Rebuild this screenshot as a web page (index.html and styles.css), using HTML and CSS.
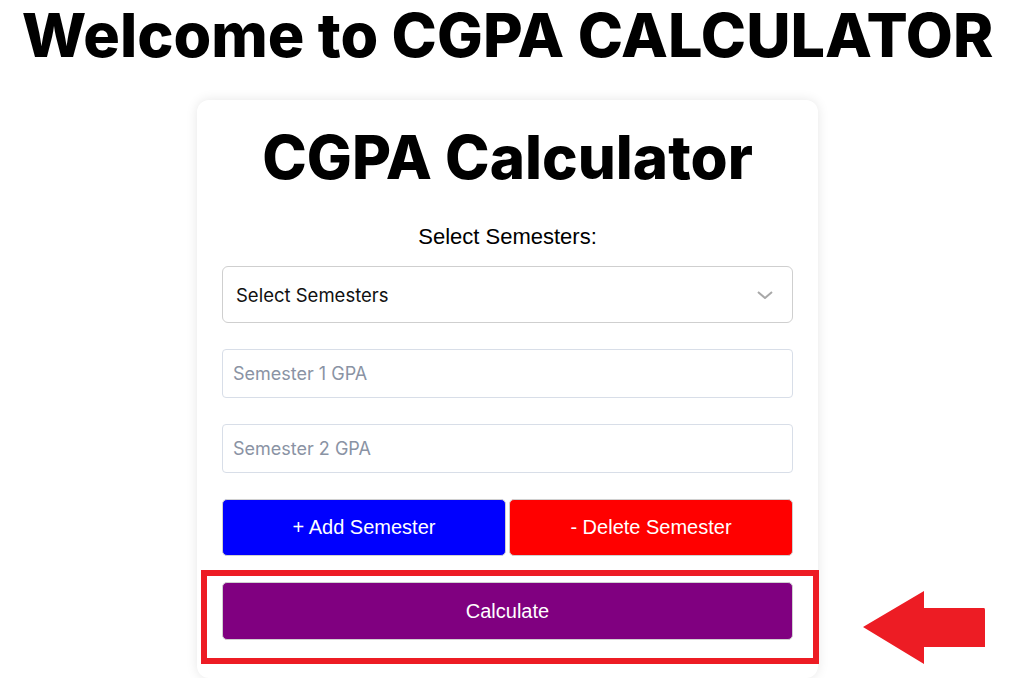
FILE: index.html
```html
<!DOCTYPE html>
<html>
<head>
<meta charset="utf-8">
<title>CGPA Calculator</title>
<link rel="stylesheet" href="styles.css">
</head>
<body>
<h1 class="page-title">Welcome to CGPA CALCULATOR</h1>
<main class="card">
  <h2 class="card-title">CGPA Calculator</h2>
  <label class="label" for="sem">Select Semesters:</label>
  <div class="select-wrap">
    <select id="sem" class="select">
      <option>Select Semesters</option>
    </select>
    <svg class="chevron" viewBox="0 0 16 8" width="16" height="8"><path d="M1 1 L8 7 L15 1" fill="none" stroke="#a8a8a8" stroke-width="2"/></svg>
  </div>
  <input class="gpa" type="text" placeholder="Semester 1 GPA">
  <input class="gpa" type="text" placeholder="Semester 2 GPA">
  <div class="btn-row">
    <button class="btn btn-add">+ Add Semester</button>
    <button class="btn btn-del">- Delete Semester</button>
  </div>
  <div class="highlight">
    <button class="btn btn-calc">Calculate</button>
  </div>
</main>
<svg class="arrow" viewBox="0 0 124 75" width="124" height="75">
  <path d="M1 37 L62 1 L62 18 L122 18 Q123 18 123 20 L123 57 L62 57 L62 74 Z" fill="#ed1c24"/>
</svg>
</body>
</html>
```

FILE: styles.css
```css
html, body {
  margin: 0;
  padding: 0;
  background: #ffffff;
}
body {
  display: flex;
  flex-direction: column;
  align-items: center;
  padding-right: 9px;
  font-family: "Liberation Sans", Arial, sans-serif;
}
.page-title {
  font-family: Inter, "Noto Sans", sans-serif;
  font-weight: 800;
  font-size: 61px;
  line-height: 70px;
  margin: 0;
  color: #000;
  white-space: nowrap;
}
.card {
  width: 621px;
  box-sizing: border-box;
  margin-top: 30px;
  background: #fff;
  border-radius: 12px;
  box-shadow: 0 0 12px rgba(0,0,0,0.10);
  padding: 22px 25px 14px 25px;
  display: flex;
  flex-direction: column;
}
.card-title {
  font-family: Inter, "Noto Sans", sans-serif;
  font-weight: 800;
  font-size: 60px;
  line-height: 70px;
  margin: 0;
  text-align: center;
  color: #000;
}
.label {
  margin-top: 32px;
  text-align: center;
  font-size: 22px;
  line-height: 26px;
  color: #000;
}
.select-wrap {
  position: relative;
  margin-top: 16px;
}
.select {
  width: 100%;
  height: 57px;
  box-sizing: border-box;
  border: 1px solid #cfcfcf;
  border-radius: 6px;
  background: #fff;
  padding: 0 13px;
  font-family: Inter, "Noto Sans", sans-serif;
  font-size: 18.5px;
  color: #111;
  appearance: none;
  -webkit-appearance: none;
}
.chevron {
  position: absolute;
  right: 20px;
  top: 25px;
}
.gpa {
  margin-top: 26px;
  height: 49px;
  box-sizing: border-box;
  border: 1px solid #d8dee8;
  border-radius: 4px;
  padding: 0 10px;
  font-family: Inter, "Noto Sans", sans-serif;
  font-size: 18px;
  background: #fff;
}
.gpa::placeholder {
  color: #8a93a4;
}
.btn-row {
  display: flex;
  gap: 3px;
  margin-top: 26px;
}
.btn {
  font-family: "Liberation Sans", Arial, sans-serif;
  font-size: 20px;
  color: #fff;
  border: 1px solid #d0d0d0;
  border-radius: 5px;
  height: 57px;
  cursor: pointer;
}
.btn-add {
  flex: 1;
  background: #0000ff;
}
.btn-del {
  flex: 1;
  background: #ff0000;
}
.highlight {
  margin: 14px -26px 0 -21px;
  border: 6px solid #ed1c24;
  padding: 6px 20px 18px 15px;
  display: flex;
  flex-direction: column;
}
.btn-calc {
  background: #800080;
  height: 58px;
  width: 100%;
}
.arrow {
  position: absolute;
  left: 862px;
  top: 590px;
}
```
